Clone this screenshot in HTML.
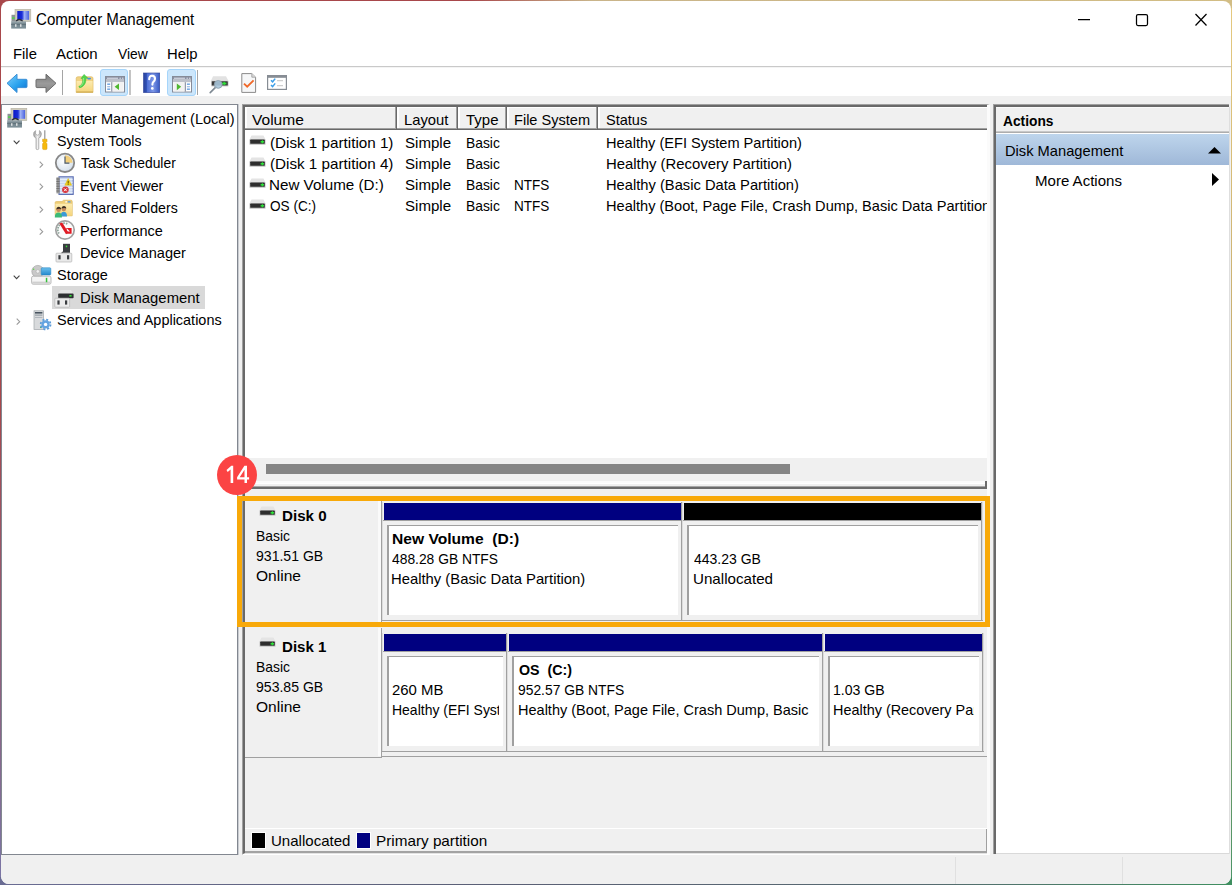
<!DOCTYPE html>
<html><head><meta charset="utf-8"><title>Computer Management</title>
<style>
*{box-sizing:border-box;margin:0;padding:0}
html,body{width:1232px;height:885px;overflow:hidden}
body{position:relative;font-family:"Liberation Sans",sans-serif;font-size:15px;color:#000;
 background:
  linear-gradient(to right,#a8474b 0,#a8474b 38%,#c9b48a 48%,#d2bd84 100%) top/100% 8px no-repeat,
  linear-gradient(to right,#6a6c93 0,#5a5f75 40%,#566a70 75%,#3f8f60 100%) bottom/100% 8px no-repeat,
  linear-gradient(to bottom,#a8474b 0,#a8474b 45%,#7a76a6 100%) left/8px 100% no-repeat,
  linear-gradient(to bottom,#e5c97f 0,#bfa66c 50%,#4a9467 100%) right/8px 100% no-repeat,
  #888;}
.abs,.win *{position:absolute}
.win{position:absolute;left:1px;top:1px;width:1230px;height:883px;background:#fff;border-radius:8px;overflow:hidden}
.t{position:absolute;white-space:pre;transform-origin:0 0;line-height:1}
.clip{position:absolute;overflow:hidden;top:0;height:885px}
svg{position:absolute;overflow:visible}
</style></head>
<body>
<div class="win"><div class="abs" id="pg" style="left:-1px;top:-1px;width:1232px;height:885px">
<!-- menubar/toolbar separators -->
<div style="left:0;top:66px;width:1232px;height:1px;background:#c9c9c9"></div>
<div style="left:0;top:67px;width:1232px;height:1px;background:#f4f4f4"></div>
<div style="left:0;top:96px;width:1232px;height:789px;background:#f0f0f0"></div>
<!-- toolbar highlighted buttons -->
<div style="left:100px;top:69px;width:28px;height:27px;background:#cce6fb;border:1px solid #a6d5fa;border-radius:3px"></div>
<div style="left:167px;top:69px;width:29px;height:27px;background:#cce6fb;border:1px solid #a6d5fa;border-radius:3px"></div>
<div style="left:62px;top:70px;width:1px;height:25px;background:#a5a5a5"></div>
<div style="left:129px;top:70px;width:2px;height:25px;background:#c4c4c4"></div>
<div style="left:197px;top:70px;width:1px;height:25px;background:#a5a5a5"></div>

<!-- tree panel -->
<div style="left:1px;top:104px;width:237px;height:751px;background:#fff;border:1px solid #828790"></div><div style="left:238px;top:104px;width:1px;height:751px;background:#c9ccd1"></div>
<div style="left:52px;top:286.4px;width:152.8px;height:22.3px;background:#d9d9d9"></div>

<!-- main panel frame -->
<div style="left:242px;top:104px;width:748px;height:751px;background:#f0f0f0;border-left:1px solid #a0a0a0;border-top:1px solid #a0a0a0;border-right:3px solid #fbfbfb;border-bottom:1px solid #fff"></div>
<div style="left:243px;top:105px;width:744px;height:749px;border-left:2px solid #696969;border-top:2px solid #696969;border-bottom:1px solid #e3e3e3"></div>
<!-- list view -->
<div style="left:245px;top:107px;width:742px;height:377px;background:#fff"></div>
<div style="left:245px;top:107px;width:742px;height:23px;background:#f0f0f0;border-bottom:1px solid #696969"></div><div style="left:245px;top:128px;width:742px;height:1px;background:#a0a0a0"></div>
<div style="left:245px;top:107px;width:2px;height:21px;background:linear-gradient(to right,#fff 70%,#f8f8f8)"></div><div style="left:245px;top:107px;width:152px;height:1px;background:#fff"></div><div style="left:395px;top:107px;width:1px;height:22px;background:#a0a0a0"></div><div style="left:396px;top:107px;width:1px;height:23px;background:#696969"></div>
<div style="left:397px;top:107px;width:2px;height:21px;background:linear-gradient(to right,#fff 70%,#f8f8f8)"></div><div style="left:397px;top:107px;width:61px;height:1px;background:#fff"></div><div style="left:456px;top:107px;width:1px;height:22px;background:#a0a0a0"></div><div style="left:457px;top:107px;width:1px;height:23px;background:#696969"></div>
<div style="left:458px;top:107px;width:2px;height:21px;background:linear-gradient(to right,#fff 70%,#f8f8f8)"></div><div style="left:458px;top:107px;width:49px;height:1px;background:#fff"></div><div style="left:505px;top:107px;width:1px;height:22px;background:#a0a0a0"></div><div style="left:506px;top:107px;width:1px;height:23px;background:#696969"></div>
<div style="left:507px;top:107px;width:2px;height:21px;background:linear-gradient(to right,#fff 70%,#f8f8f8)"></div><div style="left:507px;top:107px;width:91px;height:1px;background:#fff"></div><div style="left:596px;top:107px;width:1px;height:22px;background:#a0a0a0"></div><div style="left:597px;top:107px;width:1px;height:23px;background:#696969"></div>
<div style="left:598px;top:107px;width:2px;height:21px;background:linear-gradient(to right,#fff 70%,#f8f8f8)"></div><div style="left:598px;top:107px;width:389px;height:1px;background:#fff"></div>
<!-- hscroll -->
<div style="left:245px;top:458px;width:742px;height:25px;background:#f0f0f0"></div>
<div style="left:266px;top:464px;width:524px;height:10px;background:#858585"></div>
<div style="left:245px;top:481px;width:742px;height:2px;background:#fbfbfb"></div>
<div style="left:245px;top:486px;width:742px;height:1px;background:#a6a6a6"></div>
<div style="left:245px;top:487px;width:742px;height:2px;background:#6b6b6b"></div>
<div style="left:985px;top:481px;width:2px;height:8px;background:#6b6b6b"></div>

<div style="left:245px;top:497px;width:137px;height:130px;border-right:1px solid #a0a0a0;border-bottom:1px solid #a0a0a0"></div><div style="left:378px;top:497px;width:3px;height:128px;background:#fafafa"></div><div style="left:381px;top:502px;width:1px;height:118px;background:#a0a0a0"></div><div style="left:382px;top:502px;width:1px;height:118px;background:#dcdcdc"></div><div style="left:384px;top:503px;width:297px;height:17px;background:#000080"></div><div style="left:383px;top:520px;width:298px;height:1px;background:#a0a0a0"></div><div style="left:387px;top:525px;width:291px;height:90px;background:#fff;border-left:2px solid #a0a0a0;border-top:1px solid #a0a0a0"></div>
<div style="left:681px;top:502px;width:1px;height:118px;background:#a0a0a0"></div><div style="left:682px;top:502px;width:1px;height:118px;background:#dcdcdc"></div><div style="left:684px;top:503px;width:297px;height:17px;background:#000"></div><div style="left:683px;top:520px;width:298px;height:1px;background:#a0a0a0"></div><div style="left:687px;top:525px;width:291px;height:90px;background:#fff;border-left:2px solid #a0a0a0;border-top:1px solid #a0a0a0"></div>
<div style="left:981px;top:502px;width:1px;height:118px;background:#a0a0a0"></div><div style="left:982px;top:502px;width:1px;height:118px;background:#dcdcdc"></div><div style="left:382px;top:620px;width:601px;height:1px;background:#a0a0a0"></div><div style="left:382px;top:625px;width:605px;height:1px;background:#a0a0a0"></div><div style="left:245px;top:628px;width:137px;height:130px;border-right:1px solid #a0a0a0;border-bottom:1px solid #a0a0a0"></div><div style="left:378px;top:628px;width:3px;height:128px;background:#fafafa"></div><div style="left:381px;top:633px;width:1px;height:118px;background:#a0a0a0"></div><div style="left:382px;top:633px;width:1px;height:118px;background:#dcdcdc"></div><div style="left:384px;top:634px;width:122px;height:17px;background:#000080"></div><div style="left:383px;top:651px;width:123px;height:1px;background:#a0a0a0"></div><div style="left:387px;top:656px;width:116px;height:90px;background:#fff;border-left:2px solid #a0a0a0;border-top:1px solid #a0a0a0"></div>
<div style="left:506px;top:633px;width:1px;height:118px;background:#a0a0a0"></div><div style="left:507px;top:633px;width:1px;height:118px;background:#dcdcdc"></div><div style="left:509px;top:634px;width:313px;height:17px;background:#000080"></div><div style="left:508px;top:651px;width:314px;height:1px;background:#a0a0a0"></div><div style="left:512px;top:656px;width:307px;height:90px;background:#fff;border-left:2px solid #a0a0a0;border-top:1px solid #a0a0a0"></div>
<div style="left:822px;top:633px;width:1px;height:118px;background:#a0a0a0"></div><div style="left:823px;top:633px;width:1px;height:118px;background:#dcdcdc"></div><div style="left:825px;top:634px;width:157px;height:17px;background:#000080"></div><div style="left:824px;top:651px;width:158px;height:1px;background:#a0a0a0"></div><div style="left:828px;top:656px;width:151px;height:90px;background:#fff;border-left:2px solid #a0a0a0;border-top:1px solid #a0a0a0"></div>
<div style="left:982px;top:633px;width:1px;height:118px;background:#a0a0a0"></div><div style="left:983px;top:633px;width:1px;height:118px;background:#dcdcdc"></div><div style="left:382px;top:751px;width:602px;height:1px;background:#a0a0a0"></div><div style="left:382px;top:756px;width:605px;height:1px;background:#a0a0a0"></div><div style="left:237px;top:496px;width:753px;height:131px;border:5px solid #f8a909"></div>

<!-- legend -->
<div style="left:245px;top:828px;width:742px;height:1px;background:#fff"></div>
<div style="left:251px;top:832px;width:15px;height:17px;background:#fff"></div>
<div style="left:252px;top:833px;width:13px;height:15px;background:#000"></div>
<div style="left:356px;top:832px;width:15px;height:17px;background:#fff"></div>
<div style="left:357px;top:833px;width:13px;height:15px;background:#000080"></div>
<div style="left:245px;top:851px;width:742px;height:2px;background:#a3a3a3"></div>
<div style="left:986px;top:829px;width:1px;height:23px;background:#a0a0a0"></div>

<!-- actions panel -->
<div style="left:993px;top:104px;width:236px;height:750px;background:#fff;border-left:1px solid #a0a0a0;border-top:1px solid #a0a0a0"></div>
<div style="left:994px;top:105px;width:235px;height:749px;border-left:2px solid #696969;border-top:2px solid #696969"></div>
<div style="left:996px;top:107px;width:233px;height:26px;background:#f0f0f0;border-top:1px solid #fafafa;border-bottom:1px solid #adadad"></div><div style="left:996px;top:131px;width:233px;height:1px;background:#c8c8c8"></div>
<div style="left:996px;top:134px;width:233px;height:31px;background:linear-gradient(#bed5ec,#9fb8d8)"></div>
<svg style="left:1208px;top:147px" width="13" height="7"><path d="M0 6.5L6.5 0L13 6.5Z" fill="#000"/></svg>
<svg style="left:1212px;top:173px" width="7" height="13"><path d="M0 0L7 6.5L0 13Z" fill="#000"/></svg>

<div style="left:996px;top:853px;width:234px;height:1px;background:#d9d9d9"></div><div style="left:1229px;top:107px;width:1px;height:747px;background:#dedede"></div>
<!-- status bar -->
<div style="left:955px;top:857px;width:1px;height:27px;background:#e0e0e0"></div>
<div style="left:1122px;top:857px;width:1px;height:27px;background:#e0e0e0"></div>

<!-- window controls -->
<svg style="left:1078px;top:13px" width="130" height="14" fill="none" stroke="#000" stroke-width="1.25">
<path d="M0 6.5H12"/><rect x="58.5" y="1.5" width="11" height="11" rx="1.5"/><path d="M117.5 1L128.5 12.5M128.5 1L117.5 12.5"/></svg>

<!-- marker 14 -->
<div style="left:217px;top:455px;width:40px;height:40px;border-radius:50%;background:#fb4444"></div>
<svg style="left:217px;top:455px" width="40" height="40" viewBox="217 455 40 40" fill="#fff"><path d="M233.2 465.8H231.3L226.5 470.1L227.7 472L230.6 469.5V483H233.2Z"/><path fill-rule="evenodd" d="M247 465.8H244.4L237.1 477.3V479.6H244.5V483H247V479.6H249.1V477.3H247ZM244.5 469.8V477.3H239.7Z"/></svg>
<svg width="0" height="0" style="left:0;top:0"><defs>
<linearGradient id="gBack" x1="0" y1="0" x2="1" y2="1"><stop offset="0" stop-color="#7fd0fb"/><stop offset=".55" stop-color="#2aa2ee"/><stop offset="1" stop-color="#0a6fd0"/></linearGradient>
<linearGradient id="gFwd" x1="0" y1="0" x2="0" y2="1"><stop offset="0" stop-color="#7a7a7a"/><stop offset=".5" stop-color="#9a9a9a"/><stop offset="1" stop-color="#858585"/></linearGradient>
<linearGradient id="gFold" x1="0" y1="0" x2="0" y2="1"><stop offset="0" stop-color="#fcebb0"/><stop offset="1" stop-color="#f5d57e"/></linearGradient>
<linearGradient id="gHelp" x1="0" y1="0" x2="1" y2="0"><stop offset="0" stop-color="#2c449c"/><stop offset=".18" stop-color="#2f4fb4"/><stop offset=".22" stop-color="#4d6ed6"/><stop offset=".6" stop-color="#7d97e6"/><stop offset="1" stop-color="#3558c4"/></linearGradient>
<linearGradient id="gScr" x1="0" y1="0" x2="1" y2="0"><stop offset="0" stop-color="#0a18c8"/><stop offset=".4" stop-color="#1c2fd8"/><stop offset=".6" stop-color="#9fb2f4"/><stop offset="1" stop-color="#4a62e0"/></linearGradient>
<linearGradient id="gBox" x1="0" y1="0" x2="0" y2="1"><stop offset="0" stop-color="#9aa8ae"/><stop offset=".45" stop-color="#73858d"/><stop offset="1" stop-color="#80929a"/></linearGradient>
<radialGradient id="gClock" cx=".4" cy=".4" r=".7"><stop offset="0" stop-color="#ffffff"/><stop offset="1" stop-color="#cfdcea"/></radialGradient>
<linearGradient id="gDisk" x1="0" y1="0" x2="0" y2="1"><stop offset="0" stop-color="#e9e9e9"/><stop offset="1" stop-color="#c9c9c9"/></linearGradient>
<linearGradient id="gSilver" x1="0" y1="0" x2="1" y2="0"><stop offset="0" stop-color="#9b9b9b"/><stop offset=".5" stop-color="#f2f2f2"/><stop offset="1" stop-color="#a8a8a8"/></linearGradient>
<linearGradient id="gBlueR" x1="0" y1="0" x2="0" y2="1"><stop offset="0" stop-color="#6cc0ee"/><stop offset="1" stop-color="#2488cc"/></linearGradient>
</defs></svg>
<svg style="left:11px;top:9px" width="20" height="20" viewBox="0 0 20 20" ><rect x="4" y="0.3" width="15.8" height="12.2" fill="#cfcbbd" stroke="#b5b1a2" stroke-width=".6"/><rect x="6.3" y="2" width="11.8" height="8.8" fill="url(#gScr)"/><rect x="0.5" y="5.8" width="3.6" height="7" fill="#8d9397"/><rect x="1" y="8.3" width="2.6" height="1.6" fill="#4fd24a"/><path d="M4.8 12.4Q8.2 8.6 11.8 12.4" fill="none" stroke="#2b2f3a" stroke-width="1.5"/><rect x="0.2" y="12.3" width="14.8" height="7.3" fill="url(#gBox)"/><rect x="0.2" y="14.8" width="14.8" height="1" fill="#5f7078"/><rect x="4.2" y="15.2" width="1.2" height="2.6" fill="#f4f4f4"/><rect x="9.2" y="15.2" width="1.2" height="2.6" fill="#f4f4f4"/></svg>
<svg style="left:6px;top:73px" width="22" height="21" viewBox="0 0 22 21" ><path d="M1 10.3L11 1.2V6.3H20.2Q21 6.3 21 7.2V13.6Q21 14.6 20.2 14.6H11V19.5Z" fill="url(#gBack)" stroke="#3b8fd6" stroke-width="1" stroke-linejoin="round"/></svg>
<svg style="left:35px;top:73px" width="22" height="21" viewBox="0 0 22 21" ><path d="M21 10.3L11 1.2V6.3H1.8Q1 6.3 1 7.2V13.6Q1 14.6 1.8 14.6H11V19.5Z" fill="url(#gFwd)" stroke="#6c6c6c" stroke-width="1" stroke-linejoin="round"/></svg>
<svg style="left:75px;top:73px" width="20" height="21" viewBox="0 0 20 21" ><path d="M1.2 5.4Q1.2 3.8 2.8 3.8H16.4Q18 3.8 18 5.4V19.4H1.2Z" fill="#f1d282" stroke="#dcba64" stroke-width=".7"/><path d="M1.6 8H17.6V18.6H1.6Z" fill="url(#gFold)"/><rect x="1.2" y="18.4" width="16.8" height="1.2" fill="#d3ae55"/><rect x="12.2" y="4.8" width="3.8" height="1.6" rx=".8" fill="#4a8fe0"/><path d="M3.8 13.4C7.6 12 8 8.4 7.6 5.6L6 5.6L9 1.4L12.8 5L10.8 5.4C11.4 9.8 8.8 13.8 4.6 14.8Z" fill="#52d44c" stroke="#3cba38" stroke-width=".5"/><path d="M5 13.4C8 12 8.8 8.6 8.6 5" fill="none" stroke="#9df094" stroke-width=".8"/></svg>
<svg style="left:105px;top:76px" width="20" height="17" viewBox="0 0 20 17" ><rect x=".5" y=".5" width="19" height="15.5" fill="#fff" stroke="#868b98"/><rect x="1" y="1" width="18" height="2.6" fill="#8990a3"/><rect x="2" y="1.7" width="11" height="1" fill="#e4e6ee"/><rect x="14.5" y="1.7" width="1.4" height="1" fill="#e4e6ee"/><rect x="17" y="1.7" width="1.4" height="1" fill="#e4e6ee"/><rect x="1" y="3.6" width="18" height="2.6" fill="#bcc0ca"/><rect x="6.3" y="6.2" width="1.2" height="9.3" fill="#7c8294"/><rect x="2.2" y="7.6" width="3" height="1.1" fill="#3f86d8"/><rect x="2.2" y="10.2" width="3" height="1.1" fill="#8fb2e0"/><rect x="2.2" y="12.6" width="3" height="1.1" fill="#3f86d8"/><rect x="7.5" y="6.2" width="11" height="9.3" fill="#f2f2f2"/><path d="M14 7.6V14L9.6 10.8Z" fill="#4fb830"/></svg>
<svg style="left:143px;top:72px" width="17" height="21" viewBox="0 0 17 21" ><rect x=".5" y="1" width="16.2" height="19.6" fill="url(#gHelp)" stroke="#2b409a" stroke-width=".6"/><path d="M6.2 7.2Q6.2 3.8 9 3.8Q12 3.8 12 6.8Q12 8.6 10.4 9.8Q9.4 10.6 9.4 12.6" fill="none" stroke="#fff" stroke-width="2.1" stroke-linecap="round"/><circle cx="9.3" cy="16.4" r="1.35" fill="#fff"/></svg>
<svg style="left:172px;top:76px" width="20" height="17" viewBox="0 0 20 17" ><rect x=".5" y=".5" width="19" height="15.5" fill="#fff" stroke="#868b98"/><rect x="1" y="1" width="18" height="2.6" fill="#8990a3"/><rect x="2" y="1.7" width="11" height="1" fill="#e4e6ee"/><rect x="14.5" y="1.7" width="1.4" height="1" fill="#e4e6ee"/><rect x="17" y="1.7" width="1.4" height="1" fill="#e4e6ee"/><rect x="1" y="3.6" width="18" height="2.6" fill="#bcc0ca"/><rect x="12.6" y="6.2" width="1.2" height="9.3" fill="#7c8294"/><rect x="14.9" y="7.6" width="3" height="1.1" fill="#3f86d8"/><rect x="14.9" y="10.2" width="3" height="1.1" fill="#8fb2e0"/><rect x="14.9" y="12.6" width="3" height="1.1" fill="#3f86d8"/><rect x="1.5" y="6.2" width="11" height="9.3" fill="#f2f2f2"/><path d="M4.8 7.4V14.2L9.2 10.8Z" fill="#4fb830"/></svg>
<svg style="left:209px;top:75px" width="21" height="19" viewBox="0 0 21 19" ><path d="M4 1.2H17L19.4 5.8H2Z" fill="#e2e2e2"/><rect x="2" y="5.4" width="17.6" height="6.2" rx="1" fill="#cfcfcf"/><rect x="2.8" y="6.2" width="16" height="4.4" rx=".6" fill="#3a3a3a"/><rect x="13" y="7.6" width="4.4" height="1.8" fill="#2fe03a"/><rect x="14.6" y="6.8" width="1.2" height="3.4" fill="#2fe03a"/><path d="M7.2 11.6L1.2 17.6" stroke="#7f8a94" stroke-width="1.6" stroke-linecap="round"/><circle cx="9.2" cy="9.4" r="3.9" fill="#a9c6dc" fill-opacity=".9" stroke="#8ea0ae" stroke-width=".9"/></svg>
<svg style="left:241px;top:73px" width="16" height="20" viewBox="0 0 16 20" ><path d="M.8 .6H10.8L14.6 4.2V19.4H.8Z" fill="#f6f7f8" stroke="#8b8b8b" stroke-width="1"/><path d="M10.8 .6V4.2H14.6" fill="#dcdcdc" stroke="#9b9b9b" stroke-width=".8"/><path d="M3 10.6L6.2 13.6L12.6 7.4" fill="none" stroke="#f0692a" stroke-width="1.9"/></svg>
<svg style="left:267px;top:75px" width="20" height="15" viewBox="0 0 20 15" ><rect x=".6" y=".6" width="18.8" height="13.8" fill="#fff" stroke="#878d94" stroke-width="1.2"/><rect x=".6" y=".6" width="18.8" height="2.2" fill="#878d94"/><path d="M4 5.2L5.6 6.8L8.2 3.6M4 10L5.6 11.6L8.2 8.4" fill="none" stroke="#3d9fe8" stroke-width="1.5"/><rect x="10" y="5.2" width="6" height="1" fill="#c4c4c4"/><rect x="10" y="10.2" width="6" height="1" fill="#c4c4c4"/></svg>
<svg style="left:7px;top:108px" width="20" height="20" viewBox="0 0 20 20" ><rect x="4" y="0.3" width="15.8" height="12.2" fill="#cfcbbd" stroke="#b5b1a2" stroke-width=".6"/><rect x="6.3" y="2" width="11.8" height="8.8" fill="url(#gScr)"/><rect x="0.5" y="5.8" width="3.6" height="7" fill="#8d9397"/><rect x="1" y="8.3" width="2.6" height="1.6" fill="#4fd24a"/><path d="M4.8 12.4Q8.2 8.6 11.8 12.4" fill="none" stroke="#2b2f3a" stroke-width="1.5"/><rect x="0.2" y="12.3" width="14.8" height="7.3" fill="url(#gBox)"/><rect x="0.2" y="14.8" width="14.8" height="1" fill="#5f7078"/><rect x="4.2" y="15.2" width="1.2" height="2.6" fill="#f4f4f4"/><rect x="9.2" y="15.2" width="1.2" height="2.6" fill="#f4f4f4"/></svg>
<svg style="left:13.4px;top:139.7px" width="8" height="5" viewBox="0 0 8 5" ><path d="M.7 .7L3.6 3.6L6.5 .7" fill="none" stroke="#444" stroke-width="1.1"/></svg>
<svg style="left:13.4px;top:274.7px" width="8" height="5" viewBox="0 0 8 5" ><path d="M.7 .7L3.6 3.6L6.5 .7" fill="none" stroke="#444" stroke-width="1.1"/></svg>
<svg style="left:39.3px;top:160.8px" width="5" height="8" viewBox="0 0 5 8" ><path d="M.7 .7L3.7 3.7L.7 6.7" fill="none" stroke="#9b9b9b" stroke-width="1.1"/></svg>
<svg style="left:39.3px;top:183.3px" width="5" height="8" viewBox="0 0 5 8" ><path d="M.7 .7L3.7 3.7L.7 6.7" fill="none" stroke="#9b9b9b" stroke-width="1.1"/></svg>
<svg style="left:39.3px;top:205.8px" width="5" height="8" viewBox="0 0 5 8" ><path d="M.7 .7L3.7 3.7L.7 6.7" fill="none" stroke="#9b9b9b" stroke-width="1.1"/></svg>
<svg style="left:39.3px;top:228.3px" width="5" height="8" viewBox="0 0 5 8" ><path d="M.7 .7L3.7 3.7L.7 6.7" fill="none" stroke="#9b9b9b" stroke-width="1.1"/></svg>
<svg style="left:15.6px;top:318.3px" width="5" height="8" viewBox="0 0 5 8" ><path d="M.7 .7L3.7 3.7L.7 6.7" fill="none" stroke="#9b9b9b" stroke-width="1.1"/></svg>
<svg style="left:33px;top:130px" width="15" height="20" viewBox="0 0 15 20" ><path d="M2.6 .6Q.2 2 .6 5Q1 7.4 3 8.2V18.4Q3 19.6 4.4 19.6Q5.8 19.6 5.8 18.4V8.2Q8.4 7 8.4 4Q8.2 1.6 6.4 .6V4.2L4.6 5.2L2.6 4.2Z" fill="url(#gSilver)" stroke="#8d8d8d" stroke-width=".6"/><rect x="11" y=".3" width="1.5" height="9.4" fill="#a9a9a9"/><path d="M9.6 9.2H14V11.6L13 12.6L14 13.8V18.6Q14 19.6 13 19.6H10.6Q9.6 19.6 9.6 18.6V13.8L10.6 12.6L9.6 11.6Z" fill="#f6b90c" stroke="#d69a06" stroke-width=".5"/></svg>
<svg style="left:54px;top:152px" width="22" height="22" viewBox="0 0 22 22" ><circle cx="11" cy="10.8" r="9.2" fill="url(#gClock)" stroke="#878787" stroke-width="1.8"/><path d="M11 10.8V3.2A7.6 7.6 0 0 1 18.6 10.8Z" fill="#f2cf7c"/><path d="M11 4.6V11.2H15.4" fill="none" stroke="#4a5866" stroke-width="1.2"/></svg>
<svg style="left:56px;top:176px" width="18" height="19" viewBox="0 0 18 19" ><rect x="3" y=".8" width="14.2" height="17.6" fill="#c9d7f0" stroke="#5b6db2" stroke-width="1.1"/><path d="M4 3.6H16.6M4 6.2H16.6M4 8.8H16.6M4 11.4H16.6M4 14H16.6M4 16.4H16.6" stroke="#eef3fb" stroke-width=".9"/><rect x=".4" y="1.4" width="3.2" height="16" fill="#9a9a9a"/><path d="M.4 3H3.6M.4 5.4H3.6M.4 7.8H3.6M.4 10.2H3.6M.4 12.6H3.6M.4 15H3.6" stroke="#6a6a6a" stroke-width=".9"/><path d="M12.2 2.6L15.6 9.2H8.8Z" fill="#f3d321" stroke="#d6b400" stroke-width=".5"/><rect x="11.7" y="4.8" width="1" height="2.6" fill="#5a4a00"/><rect x="11.7" y="7.8" width="1" height=".9" fill="#5a4a00"/><circle cx="9.4" cy="13.8" r="3.3" fill="#d8343c"/><path d="M8 12.4L10.8 15.2M10.8 12.4L8 15.2" stroke="#fff" stroke-width="1"/></svg>
<svg style="left:54px;top:199px" width="20" height="20" viewBox="0 0 20 20" ><path d="M1.2 3.6Q1.2 2.6 2.2 2.6H8L9.6 1.2H17Q18.2 1.2 18.2 2.4V16.8H1.2Z" fill="#f0cf78" stroke="#dcb95e" stroke-width=".7"/><path d="M9 4.8H18V16.6H1.4V4.8Z" fill="url(#gFold)"/><rect x="11.2" y="2.2" width="2" height="1.4" rx=".6" fill="#fff"/><rect x="13.6" y="2.2" width="3" height="1.4" rx=".6" fill="#4a8fe0"/><path d="M6.6 17.4Q6.6 12.8 9.8 12.8Q13 12.8 13 17.4Z" fill="#3c9ad6"/><circle cx="9.8" cy="10" r="2.3" fill="#c58a5c"/><path d="M7.4 9.6Q7.6 7 9.8 7Q12.2 7 12.3 9.6Q10.8 8.4 7.4 9.6Z" fill="#3a2c22"/><path d="M.8 18.6Q.8 13.6 4.4 13.6Q8 13.6 8 18.6Z" fill="#3cba78"/><circle cx="4.6" cy="10.8" r="2.3" fill="#c58a5c"/><path d="M2.2 10.4Q2.4 7.8 4.6 7.8Q7 7.8 7.1 10.4Q5.6 9.2 2.2 10.4Z" fill="#3a2c22"/></svg>
<svg style="left:54px;top:219px" width="22" height="22" viewBox="0 0 22 22" ><circle cx="11" cy="11" r="9.2" fill="#fbfbfb" stroke="#a2a2a2" stroke-width="1.7"/><path d="M5 14.6A6.6 6.6 0 0 1 13.6 5" fill="none" stroke="#8fa79c" stroke-width="1.8" stroke-dasharray="1.6 1"/><path d="M12.2 9H17.6V14.8H12.2Z" fill="#e01b24"/><path d="M12.8 9.2L16 12.6H12.4Z" fill="#fff"/><path d="M11.4 5.4L13.4 9L11 8.6Z" fill="#fff"/><path d="M5.4 4.6L8.2 3.6L14.4 13.6L12 15.2Z" fill="#e01b24"/></svg>
<svg style="left:55px;top:243px" width="18" height="20" viewBox="0 0 18 20" ><path d="M5.4 10.4L8 8.2V10.4Z" fill="#555"/><rect x="8" y=".8" width="7" height="9" fill="#3a3d40"/><rect x="10.8" y="2.6" width="1.4" height="1.6" fill="#35e03a"/><rect x="1" y="10.2" width="15.8" height="8.8" rx=".8" fill="#e9e9e9" stroke="#b4b4b4" stroke-width=".7"/><rect x="3.4" y="12.2" width="2.2" height="4.2" fill="#3a3d40"/><rect x="12" y="12.2" width="2.2" height="4.2" fill="#3a3d40"/></svg>
<svg style="left:31px;top:265px" width="21" height="20" viewBox="0 0 21 20" ><circle cx="6.8" cy="6.4" r="6" fill="#c9c9c9" stroke="#9c9c9c" stroke-width=".6"/><circle cx="6.8" cy="6.4" r="1.8" fill="#efefef" stroke="#a4a4a4" stroke-width=".5"/><circle cx="2.6" cy="4.2" r=".8" fill="#5fd24a"/><rect x="10.2" y="2.8" width="9.6" height="7.2" rx="1" fill="url(#gBlueR)" stroke="#2a86c4" stroke-width=".6"/><rect x=".6" y="11.2" width="19.4" height="8" rx="1.6" fill="#f4f4f4" stroke="#a9a9a9" stroke-width=".8"/><rect x="1.2" y="16.6" width="18.2" height="2" fill="#cfcfcf"/><rect x="14.8" y="12.8" width="1.5" height="4.4" fill="#35c03a"/></svg>
<svg style="left:54px;top:289px" width="21" height="19" viewBox="0 0 21 19" ><path d="M6.6 1H17L19 5H4.2Z" fill="#e6e6e6"/><rect x="4.2" y="4.6" width="15.4" height="4.6" rx=".8" fill="#2e3032"/><rect x="15.4" y="6" width="2.2" height="1.6" fill="#35e03a"/><rect x=".8" y="9.2" width="14.8" height="9" rx=".8" fill="#ececec" stroke="#b4b4b4" stroke-width=".7"/><rect x="3.4" y="11.4" width="2.2" height="4.2" fill="#3a3d40"/><rect x="11" y="11.4" width="2.2" height="4.2" fill="#3a3d40"/></svg>
<svg style="left:33px;top:310px" width="19" height="21" viewBox="0 0 19 21" ><rect x="1" y=".8" width="9.4" height="18.8" fill="#d8dadc" stroke="#a2a6aa" stroke-width=".7"/><rect x="2" y="2" width="7.4" height="1.6" fill="#4a5560"/><rect x="2" y="4.6" width="7.4" height="1" fill="#8a949c"/><rect x="2" y="7" width="7.4" height="1" fill="#b0b6bc"/><rect x="7" y="16.8" width="1.6" height="1.2" fill="#48c83a"/><circle cx="12.6" cy="14.4" r="4.9" fill="none" stroke="#5c9bd8" stroke-width="1.8" stroke-dasharray="2 1.85"/><circle cx="12.6" cy="14.4" r="4.1" fill="#65a4e0"/><circle cx="12.6" cy="14.4" r="1.7" fill="#fff"/></svg>
<svg style="left:248.8px;top:135.3px" width="17" height="11" viewBox="0 0 17 11" ><path d="M2.5 0.5H14.5L16.5 4.5H0.5Z" fill="#e4e4e4"/><rect x="0.3" y="4" width="16.4" height="6" rx="1" fill="#d0d0d0"/><rect x="1.2" y="4.6" width="14.6" height="4.2" rx=".6" fill="#2e2e2e"/><rect x="11.6" y="6" width="3.4" height="1.6" fill="#2fe03a"/><rect x="12.8" y="5.2" width="1.1" height="3.2" fill="#2fe03a"/></svg>
<svg style="left:248.8px;top:156.6px" width="17" height="11" viewBox="0 0 17 11" ><path d="M2.5 0.5H14.5L16.5 4.5H0.5Z" fill="#e4e4e4"/><rect x="0.3" y="4" width="16.4" height="6" rx="1" fill="#d0d0d0"/><rect x="1.2" y="4.6" width="14.6" height="4.2" rx=".6" fill="#2e2e2e"/><rect x="11.6" y="6" width="3.4" height="1.6" fill="#2fe03a"/><rect x="12.8" y="5.2" width="1.1" height="3.2" fill="#2fe03a"/></svg>
<svg style="left:248.8px;top:178px" width="17" height="11" viewBox="0 0 17 11" ><path d="M2.5 0.5H14.5L16.5 4.5H0.5Z" fill="#e4e4e4"/><rect x="0.3" y="4" width="16.4" height="6" rx="1" fill="#d0d0d0"/><rect x="1.2" y="4.6" width="14.6" height="4.2" rx=".6" fill="#2e2e2e"/><rect x="11.6" y="6" width="3.4" height="1.6" fill="#2fe03a"/><rect x="12.8" y="5.2" width="1.1" height="3.2" fill="#2fe03a"/></svg>
<svg style="left:248.8px;top:199.3px" width="17" height="11" viewBox="0 0 17 11" ><path d="M2.5 0.5H14.5L16.5 4.5H0.5Z" fill="#e4e4e4"/><rect x="0.3" y="4" width="16.4" height="6" rx="1" fill="#d0d0d0"/><rect x="1.2" y="4.6" width="14.6" height="4.2" rx=".6" fill="#2e2e2e"/><rect x="11.6" y="6" width="3.4" height="1.6" fill="#2fe03a"/><rect x="12.8" y="5.2" width="1.1" height="3.2" fill="#2fe03a"/></svg>
<svg style="left:258.6px;top:506px" width="17" height="11" viewBox="0 0 17 11" ><path d="M2.5 0.5H14.5L16.5 4.5H0.5Z" fill="#e4e4e4"/><rect x="0.3" y="4" width="16.4" height="6" rx="1" fill="#d0d0d0"/><rect x="1.2" y="4.6" width="14.6" height="4.2" rx=".6" fill="#2e2e2e"/><rect x="11.6" y="6" width="3.4" height="1.6" fill="#2fe03a"/><rect x="12.8" y="5.2" width="1.1" height="3.2" fill="#2fe03a"/></svg>
<svg style="left:258.6px;top:637px" width="17" height="11" viewBox="0 0 17 11" ><path d="M2.5 0.5H14.5L16.5 4.5H0.5Z" fill="#e4e4e4"/><rect x="0.3" y="4" width="16.4" height="6" rx="1" fill="#d0d0d0"/><rect x="1.2" y="4.6" width="14.6" height="4.2" rx=".6" fill="#2e2e2e"/><rect x="11.6" y="6" width="3.4" height="1.6" fill="#2fe03a"/><rect x="12.8" y="5.2" width="1.1" height="3.2" fill="#2fe03a"/></svg>

<span class="t" style="left:35.59px;top:12.1px;font-size:16px;transform:scaleX(0.9417);">Computer Management</span>
<span class="t" style="left:13.06px;top:45.5px;font-size:15px;transform:scaleX(0.9888);">File</span>
<span class="t" style="left:56.00px;top:45.5px;font-size:15px;transform:scaleX(0.9988);">Action</span>
<span class="t" style="left:117.60px;top:45.5px;font-size:15px;transform:scaleX(0.9240);">View</span>
<span class="t" style="left:166.76px;top:45.5px;font-size:15px;transform:scaleX(0.9897);">Help</span>
<span class="t" style="left:33.27px;top:110.5px;font-size:15px;transform:scaleX(0.9709);">Computer Management (Local)</span>
<span class="t" style="left:56.79px;top:132.9px;font-size:15px;transform:scaleX(0.9516);">System Tools</span>
<span class="t" style="left:81.27px;top:155.3px;font-size:15px;transform:scaleX(0.9242);">Task Scheduler</span>
<span class="t" style="left:80.32px;top:177.7px;font-size:15px;transform:scaleX(0.9452);">Event Viewer</span>
<span class="t" style="left:80.79px;top:200.1px;font-size:15px;transform:scaleX(0.9432);">Shared Folders</span>
<span class="t" style="left:80.29px;top:222.6px;font-size:15px;transform:scaleX(0.9643);">Performance</span>
<span class="t" style="left:80.29px;top:245.0px;font-size:15px;transform:scaleX(0.9698);">Device Manager</span>
<span class="t" style="left:56.78px;top:267.4px;font-size:15px;transform:scaleX(0.9659);">Storage</span>
<span class="t" style="left:80.26px;top:289.8px;font-size:15px;transform:scaleX(0.9896);">Disk Management</span>
<span class="t" style="left:56.78px;top:312.2px;font-size:15px;transform:scaleX(0.9632);">Services and Applications</span>
<span class="t" style="left:252.40px;top:111.7px;font-size:15px;transform:scaleX(1.0364);">Volume</span>
<span class="t" style="left:404.37px;top:111.7px;font-size:15px;transform:scaleX(0.9851);">Layout</span>
<span class="t" style="left:465.95px;top:111.7px;font-size:15px;transform:scaleX(0.9984);">Type</span>
<span class="t" style="left:514.39px;top:111.7px;font-size:15px;transform:scaleX(0.9705);">File System</span>
<span class="t" style="left:605.77px;top:111.7px;font-size:15px;transform:scaleX(0.9697);">Status</span>
<span class="t" style="left:269.54px;top:134.5px;font-size:15px;transform:scaleX(1.0142);">(Disk 1 partition 1)</span>
<span class="t" style="left:404.55px;top:134.5px;font-size:15px;transform:scaleX(1.0045);">Simple</span>
<span class="t" style="left:465.55px;top:134.5px;font-size:15px;transform:scaleX(0.9229);">Basic</span>
<span class="t" style="left:605.79px;top:134.5px;font-size:15px;transform:scaleX(0.9712);">Healthy (EFI System Partition)</span>
<span class="t" style="left:269.54px;top:155.7px;font-size:15px;transform:scaleX(1.0142);">(Disk 1 partition 4)</span>
<span class="t" style="left:404.55px;top:155.7px;font-size:15px;transform:scaleX(1.0045);">Simple</span>
<span class="t" style="left:465.55px;top:155.7px;font-size:15px;transform:scaleX(0.9229);">Basic</span>
<span class="t" style="left:605.76px;top:155.7px;font-size:15px;transform:scaleX(0.9919);">Healthy (Recovery Partition)</span>
<span class="t" style="left:269.03px;top:176.9px;font-size:15px;transform:scaleX(1.0130);">New Volume (D:)</span>
<span class="t" style="left:404.55px;top:176.9px;font-size:15px;transform:scaleX(1.0045);">Simple</span>
<span class="t" style="left:465.55px;top:176.9px;font-size:15px;transform:scaleX(0.9229);">Basic</span>
<span class="t" style="left:514.27px;top:176.9px;font-size:15px;transform:scaleX(0.9020);">NTFS</span>
<span class="t" style="left:605.77px;top:176.9px;font-size:15px;transform:scaleX(0.9807);">Healthy (Basic Data Partition)</span>
<span class="t" style="left:269.62px;top:198.1px;font-size:15px;transform:scaleX(0.9076);">OS (C:)</span>
<span class="t" style="left:404.55px;top:198.1px;font-size:15px;transform:scaleX(1.0045);">Simple</span>
<span class="t" style="left:465.55px;top:198.1px;font-size:15px;transform:scaleX(0.9229);">Basic</span>
<span class="t" style="left:514.27px;top:198.1px;font-size:15px;transform:scaleX(0.9020);">NTFS</span>
<div class="clip" style="left:0;width:987px"><span class="t" style="left:605.78px;top:198.1px;font-size:15px;transform:scaleX(0.9722);">Healthy (Boot, Page File, Crash Dump, Basic Data Partition)</span></div>
<span class="t" style="left:1002.57px;top:113.2px;font-size:15px;transform:scaleX(0.9180);font-weight:700;">Actions</span>
<span class="t" style="left:1004.58px;top:143.2px;font-size:15px;transform:scaleX(0.9787);">Disk Management</span>
<span class="t" style="left:1034.55px;top:173.4px;font-size:15px;transform:scaleX(1.0024);">More Actions</span>
<span class="t" style="left:281.89px;top:508.4px;font-size:15px;transform:scaleX(1.0105);font-weight:700;">Disk 0</span>
<span class="t" style="left:255.64px;top:528.4px;font-size:15px;transform:scaleX(0.9257);">Basic</span>
<span class="t" style="left:255.90px;top:548.4px;font-size:15px;transform:scaleX(0.9367);">931.51 GB</span>
<span class="t" style="left:255.72px;top:568.4px;font-size:15px;transform:scaleX(1.0357);">Online</span>
<span class="t" style="left:391.66px;top:530.5px;font-size:15px;transform:scaleX(1.0398);font-weight:700;">New Volume  (D:)</span>
<span class="t" style="left:392.47px;top:550.5px;font-size:15px;transform:scaleX(0.9217);">488.28 GB NTFS</span>
<span class="t" style="left:391.47px;top:570.5px;font-size:15px;transform:scaleX(0.9874);">Healthy (Basic Data Partition)</span>
<span class="t" style="left:693.77px;top:550.5px;font-size:15px;transform:scaleX(0.9329);">443.23 GB</span>
<span class="t" style="left:692.99px;top:570.5px;font-size:15px;transform:scaleX(1.0097);">Unallocated</span>
<span class="t" style="left:281.90px;top:639.4px;font-size:15px;transform:scaleX(1.0047);font-weight:700;">Disk 1</span>
<span class="t" style="left:255.64px;top:659.4px;font-size:15px;transform:scaleX(0.9257);">Basic</span>
<span class="t" style="left:255.90px;top:679.4px;font-size:15px;transform:scaleX(0.9367);">953.85 GB</span>
<span class="t" style="left:255.72px;top:699.4px;font-size:15px;transform:scaleX(1.0357);">Online</span>
<span class="t" style="left:392.25px;top:681.5px;font-size:15px;transform:scaleX(0.9950);">260 MB</span>
<div class="clip" style="left:0;width:498.5px"><span class="t" style="left:391.84px;top:701.5px;font-size:15px;transform:scaleX(0.9318);">Healthy (EFI System Partition)</span></div>
<span class="t" style="left:518.53px;top:661.5px;font-size:15px;transform:scaleX(0.9498);font-weight:700;">OS  (C:)</span>
<span class="t" style="left:518.31px;top:681.5px;font-size:15px;transform:scaleX(0.9231);">952.57 GB NTFS</span>
<div class="clip" style="left:0;width:813px"><span class="t" style="left:517.79px;top:701.5px;font-size:15px;transform:scaleX(0.9682);">Healthy (Boot, Page File, Crash Dump, Basic Data Partition)</span></div>
<span class="t" style="left:833.06px;top:681.5px;font-size:15px;transform:scaleX(0.9390);">1.03 GB</span>
<div class="clip" style="left:0;width:974px"><span class="t" style="left:833.10px;top:701.5px;font-size:15px;transform:scaleX(0.9610);">Healthy (Recovery Partition)</span></div>
<span class="t" style="left:270.50px;top:833.3px;font-size:15px;transform:scaleX(1.0032);">Unallocated</span>
<span class="t" style="left:375.73px;top:833.3px;font-size:15px;transform:scaleX(1.0187);">Primary partition</span>

</div></div>
</body></html>
